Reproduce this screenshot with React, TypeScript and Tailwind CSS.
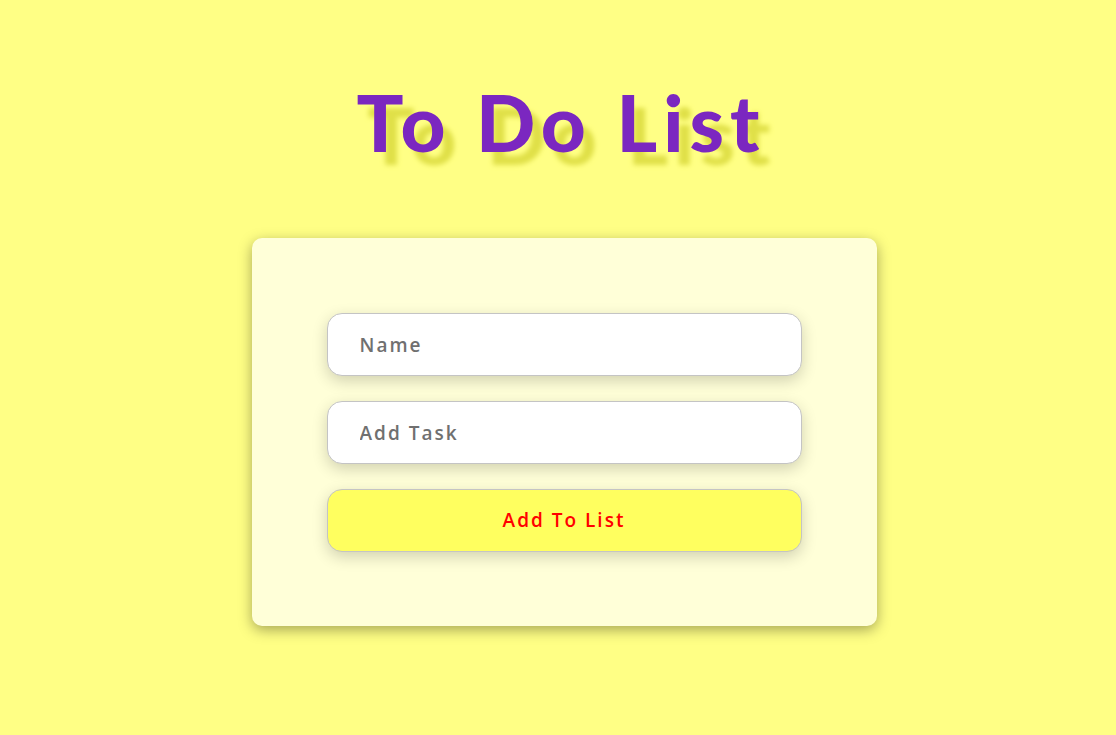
export default function App() {
	return (
		<div className="flex min-h-[735px] w-full flex-col items-center bg-[#ffff85] font-['Open_Sans',sans-serif]">
			<h1 className="ml-[6px] mt-[70px] font-['Lato',sans-serif] text-[78px] font-black leading-[104px] tracking-[6px] text-[#7b27c0] [text-shadow:11px_13px_5px_#e0e048]">
				To Do List
			</h1>

			<div className="ml-[12px] mt-[64px] flex h-[388px] w-[625px] flex-col items-center gap-[25px] rounded-[10px] bg-[#ffffd8] pt-[75px] shadow-[0_4px_14px_rgba(0,0,0,0.35)]">
				<input
					type="text"
					placeholder="Name"
					className="h-[63px] w-[475px] rounded-[15px] border border-[#c4c4c4] bg-white px-8 text-[19px] font-semibold tracking-[2px] text-[#707070] shadow-[0_5px_15px_rgba(0,0,0,0.18)] outline-none placeholder:text-[#707070]"
				/>
				<input
					type="text"
					placeholder="Add Task"
					className="h-[63px] w-[475px] rounded-[15px] border border-[#c4c4c4] bg-white px-8 text-[19px] font-semibold tracking-[2px] text-[#707070] shadow-[0_5px_15px_rgba(0,0,0,0.18)] outline-none placeholder:text-[#707070]"
				/>
				<button className="h-[63px] w-[475px] rounded-[15px] border border-[#c4c4c4] bg-[#ffff5f] text-[19px] font-semibold tracking-[2px] text-[#ff0000] shadow-[0_5px_15px_rgba(0,0,0,0.18)]">
					Add To List
				</button>
			</div>
		</div>
	);
}
